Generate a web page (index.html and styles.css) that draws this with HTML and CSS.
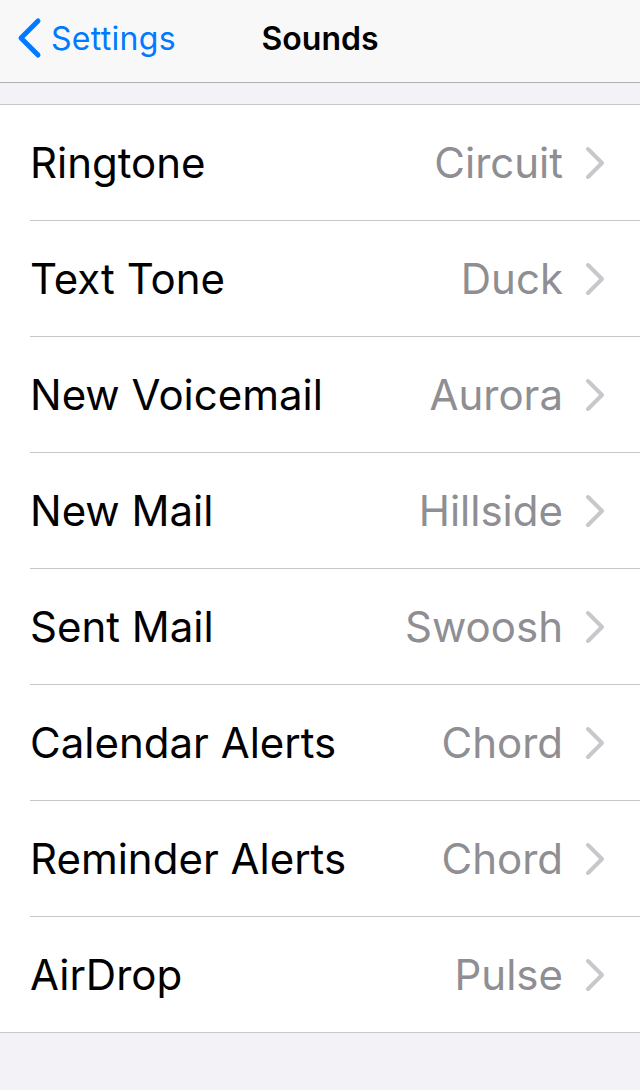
FILE: index.html
```html
<!DOCTYPE html>
<html lang="en">
<head>
    <meta charset="UTF-8">
    <title>Sounds</title>
    <link rel="stylesheet" href="styles.css">
</head>
<body>
    <div id="navbar">
        <a class="nav-back" href="#">
            <svg class="back-icon" width="26" height="42" viewBox="0 0 26 42">
                <polyline points="22,4 5,21 22,38" fill="none" stroke="#007aff" stroke-width="5" stroke-linecap="round" stroke-linejoin="round"/>
            </svg>
            <span>Settings</span>
        </a>
        <div class="nav-title">Sounds</div>
        <div class="nav-right"></div>
    </div>

    <div class="group-gap"></div>

    <ul id="sound_list">
        <li class="row"><div class="row-inner"><span class="row-label">Ringtone</span><span class="row-value">Circuit</span><svg class="chevron" width="22" height="34" viewBox="0 0 22 34"><polyline points="4,3 18,17 4,31" fill="none" stroke="#c7c7cc" stroke-width="4" stroke-linecap="round" stroke-linejoin="round"/></svg></div></li>
        <li class="row"><div class="row-inner"><span class="row-label">Text Tone</span><span class="row-value">Duck</span><svg class="chevron" width="22" height="34" viewBox="0 0 22 34"><polyline points="4,3 18,17 4,31" fill="none" stroke="#c7c7cc" stroke-width="4" stroke-linecap="round" stroke-linejoin="round"/></svg></div></li>
        <li class="row"><div class="row-inner"><span class="row-label">New Voicemail</span><span class="row-value">Aurora</span><svg class="chevron" width="22" height="34" viewBox="0 0 22 34"><polyline points="4,3 18,17 4,31" fill="none" stroke="#c7c7cc" stroke-width="4" stroke-linecap="round" stroke-linejoin="round"/></svg></div></li>
        <li class="row"><div class="row-inner"><span class="row-label">New Mail</span><span class="row-value">Hillside</span><svg class="chevron" width="22" height="34" viewBox="0 0 22 34"><polyline points="4,3 18,17 4,31" fill="none" stroke="#c7c7cc" stroke-width="4" stroke-linecap="round" stroke-linejoin="round"/></svg></div></li>
        <li class="row"><div class="row-inner"><span class="row-label">Sent Mail</span><span class="row-value">Swoosh</span><svg class="chevron" width="22" height="34" viewBox="0 0 22 34"><polyline points="4,3 18,17 4,31" fill="none" stroke="#c7c7cc" stroke-width="4" stroke-linecap="round" stroke-linejoin="round"/></svg></div></li>
        <li class="row"><div class="row-inner"><span class="row-label">Calendar Alerts</span><span class="row-value">Chord</span><svg class="chevron" width="22" height="34" viewBox="0 0 22 34"><polyline points="4,3 18,17 4,31" fill="none" stroke="#c7c7cc" stroke-width="4" stroke-linecap="round" stroke-linejoin="round"/></svg></div></li>
        <li class="row"><div class="row-inner"><span class="row-label">Reminder Alerts</span><span class="row-value">Chord</span><svg class="chevron" width="22" height="34" viewBox="0 0 22 34"><polyline points="4,3 18,17 4,31" fill="none" stroke="#c7c7cc" stroke-width="4" stroke-linecap="round" stroke-linejoin="round"/></svg></div></li>
        <li class="row"><div class="row-inner"><span class="row-label">AirDrop</span><span class="row-value">Pulse</span><svg class="chevron" width="22" height="34" viewBox="0 0 22 34"><polyline points="4,3 18,17 4,31" fill="none" stroke="#c7c7cc" stroke-width="4" stroke-linecap="round" stroke-linejoin="round"/></svg></div></li>
    </ul>
</body>
</html>
```

FILE: styles.css
```css
*{
    margin: 0;
    padding: 0;
    border: none;
    list-style: none;
}
html, body{
    height: 100%;
}
body{
    background-color: #f2f2f7;
    font-family: Inter, "Liberation Sans", Arial, sans-serif;
    -webkit-font-smoothing: antialiased;
}

/* 导航栏 */
#navbar{
    height: 76px;
    padding-bottom: 6px;
    background-color: #f8f8f8;
    border-bottom: 1px solid #b1b1b4;
    display: grid;
    grid-template-columns: 1fr auto 1fr;
    align-items: center;
}
.nav-back{
    display: flex;
    align-items: center;
    padding-left: 16px;
    color: #007aff;
    text-decoration: none;
    font-size: 32px;
    letter-spacing: 0.3px;
}
.back-icon{
    margin-right: 9px;
}
.nav-title{
    font-size: 32px;
    font-weight: 600;
    color: #000;
}

.group-gap{
    height: 21px;
}

/* 列表 */
#sound_list{
    background-color: #fff;
    border-top: 1px solid #c8c7cc;
    border-bottom: 1px solid #c8c7cc;
}
.row{
    padding-left: 30px;
}
.row-inner{
    height: 115px;
    display: flex;
    align-items: center;
    padding-right: 34px;
    border-bottom: 1px solid #c8c7cc;
}
.row:last-child .row-inner{
    border-bottom: none;
}
.row-label{
    flex: 1;
    font-size: 42px;
    color: #000;
}
.row-value{
    font-size: 42px;
    color: #8e8e93;
    margin-right: 21px;
}
.chevron{
    display: block;
}
```
